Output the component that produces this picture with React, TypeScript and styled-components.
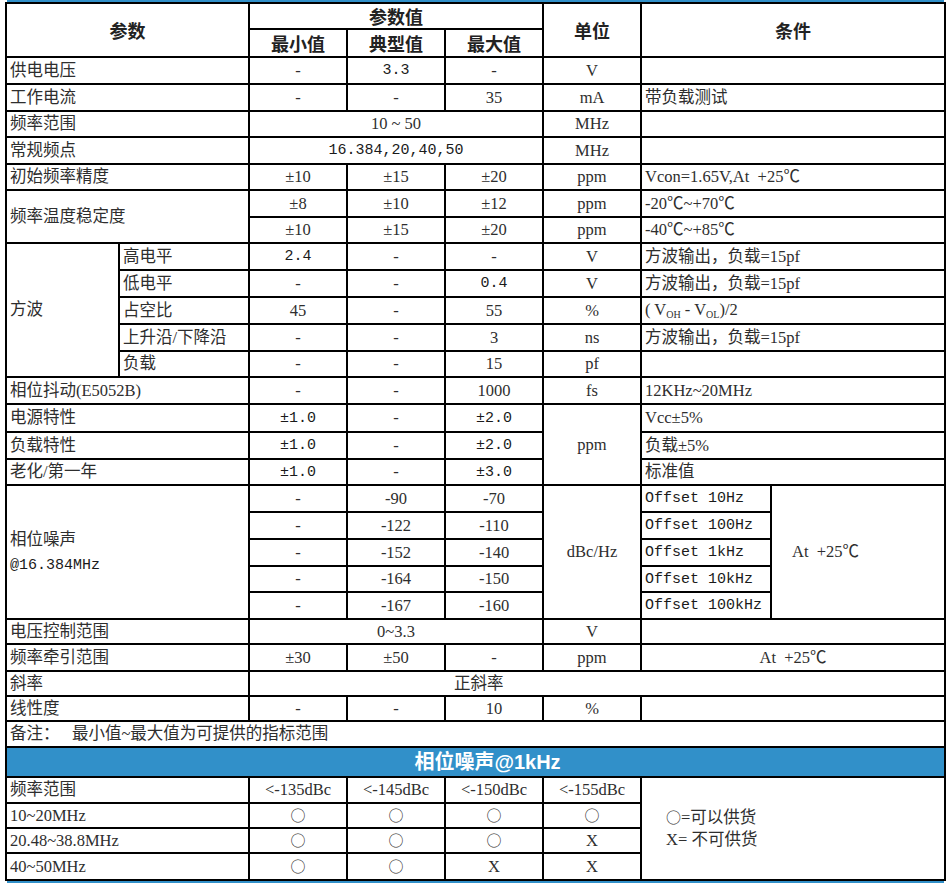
import styled, { createGlobalStyle } from "styled-components";

const BLUE = "#3190c9";
const INK = "#2e2e2e";

const GlobalStyle = createGlobalStyle`
  html, body {
    margin: 0;
    padding: 0;
    background: #fff;
  }
  body {
    font-family: "Liberation Serif", "Noto Sans CJK SC", serif;
    color: ${INK};
  }
`;

type Align = "left" | "center";

const phaseNoise = [
    { min: "-", typ: "-90", max: "-70", offset: "Offset 10Hz", h: 27 },
    { min: "-", typ: "-122", max: "-110", offset: "Offset 100Hz", h: 27 },
    { min: "-", typ: "-152", max: "-140", offset: "Offset 1kHz", h: 27 },
    { min: "-", typ: "-164", max: "-150", offset: "Offset 10kHz", h: 26 },
    { min: "-", typ: "-167", max: "-160", offset: "Offset 100kHz", h: 27 },
];

const supply = [
    { range: "10~20MHz", marks: ["○", "○", "○", "○"], h: 25 },
    { range: "20.48~38.8MHz", marks: ["○", "○", "○", "X"], h: 25 },
    { range: "40~50MHz", marks: ["○", "○", "X", "X"], h: 27 },
];

export default function App() {
    return (
        <>
            <GlobalStyle />
            <Sheet>
                <TopRule />
                <Table>
                    <colgroup>
                        <col style={{ width: 113 }} />
                        <col style={{ width: 130 }} />
                        <col style={{ width: 98 }} />
                        <col style={{ width: 98 }} />
                        <col style={{ width: 98 }} />
                        <col style={{ width: 98 }} />
                        <col style={{ width: 130 }} />
                        <col style={{ width: 174 }} />
                    </colgroup>
                    <thead>
                        <Row $h={26}>
                            <Th rowSpan={2} colSpan={2}>参数</Th>
                            <Th colSpan={3}>参数值</Th>
                            <Th rowSpan={2}>单位</Th>
                            <Th rowSpan={2} colSpan={2}>条件</Th>
                        </Row>
                        <Row $h={28}>
                            <Th>最小值</Th>
                            <Th>典型值</Th>
                            <Th>最大值</Th>
                        </Row>
                    </thead>
                    <tbody>
                        <Row $h={27}>
                            <Td colSpan={2}>供电电压</Td>
                            <Td $align="center">-</Td>
                            <Td $align="center" $mono>3.3</Td>
                            <Td $align="center">-</Td>
                            <Td $align="center">V</Td>
                            <Td colSpan={2} />
                        </Row>
                        <Row $h={27}>
                            <Td colSpan={2}>工作电流</Td>
                            <Td $align="center">-</Td>
                            <Td $align="center">-</Td>
                            <Td $align="center">35</Td>
                            <Td $align="center">mA</Td>
                            <Td colSpan={2}>带负载测试</Td>
                        </Row>
                        <Row $h={26}>
                            <Td colSpan={2}>频率范围</Td>
                            <Td colSpan={3} $align="center">10 ~ 50</Td>
                            <Td $align="center">MHz</Td>
                            <Td colSpan={2} />
                        </Row>
                        <Row $h={27}>
                            <Td colSpan={2}>常规频点</Td>
                            <Td colSpan={3} $align="center" $mono>16.384,20,40,50</Td>
                            <Td $align="center">MHz</Td>
                            <Td colSpan={2} />
                        </Row>
                        <Row $h={26}>
                            <Td colSpan={2}>初始频率精度</Td>
                            <Td $align="center">±10</Td>
                            <Td $align="center">±15</Td>
                            <Td $align="center">±20</Td>
                            <Td $align="center">ppm</Td>
                            <Td colSpan={2}>Vcon=1.65V,At&nbsp; +25℃</Td>
                        </Row>
                        <Row $h={27}>
                            <Td colSpan={2} rowSpan={2}>频率温度稳定度</Td>
                            <Td $align="center">±8</Td>
                            <Td $align="center">±10</Td>
                            <Td $align="center">±12</Td>
                            <Td $align="center">ppm</Td>
                            <Td colSpan={2}>-20℃~+70℃</Td>
                        </Row>
                        <Row $h={26}>
                            <Td $align="center">±10</Td>
                            <Td $align="center">±15</Td>
                            <Td $align="center">±20</Td>
                            <Td $align="center">ppm</Td>
                            <Td colSpan={2}>-40℃~+85℃</Td>
                        </Row>
                        <Row $h={27}>
                            <Td rowSpan={5}>方波</Td>
                            <Td>高电平</Td>
                            <Td $align="center" $mono>2.4</Td>
                            <Td $align="center">-</Td>
                            <Td $align="center">-</Td>
                            <Td $align="center">V</Td>
                            <Td colSpan={2}>方波输出，负载=15pf</Td>
                        </Row>
                        <Row $h={27}>
                            <Td>低电平</Td>
                            <Td $align="center">-</Td>
                            <Td $align="center">-</Td>
                            <Td $align="center" $mono>0.4</Td>
                            <Td $align="center">V</Td>
                            <Td colSpan={2}>方波输出，负载=15pf</Td>
                        </Row>
                        <Row $h={27}>
                            <Td>占空比</Td>
                            <Td $align="center">45</Td>
                            <Td $align="center">-</Td>
                            <Td $align="center">55</Td>
                            <Td $align="center">%</Td>
                            <Td colSpan={2}>
                                ( V<Sub>OH</Sub> - V<Sub>OL</Sub>)/2
                            </Td>
                        </Row>
                        <Row $h={27}>
                            <Td>上升沿/下降沿</Td>
                            <Td $align="center">-</Td>
                            <Td $align="center">-</Td>
                            <Td $align="center">3</Td>
                            <Td $align="center">ns</Td>
                            <Td colSpan={2}>方波输出，负载=15pf</Td>
                        </Row>
                        <Row $h={26}>
                            <Td>负载</Td>
                            <Td $align="center">-</Td>
                            <Td $align="center">-</Td>
                            <Td $align="center">15</Td>
                            <Td $align="center">pf</Td>
                            <Td colSpan={2} />
                        </Row>
                        <Row $h={27}>
                            <Td colSpan={2}>相位抖动(E5052B)</Td>
                            <Td $align="center">-</Td>
                            <Td $align="center">-</Td>
                            <Td $align="center">1000</Td>
                            <Td $align="center">fs</Td>
                            <Td colSpan={2}>12KHz~20MHz</Td>
                        </Row>
                        <Row $h={28}>
                            <Td colSpan={2}>电源特性</Td>
                            <Td $align="center" $mono>±1.0</Td>
                            <Td $align="center">-</Td>
                            <Td $align="center" $mono>±2.0</Td>
                            <Td $align="center" rowSpan={3}>ppm</Td>
                            <Td colSpan={2}>Vcc±5%</Td>
                        </Row>
                        <Row $h={27}>
                            <Td colSpan={2}>负载特性</Td>
                            <Td $align="center" $mono>±1.0</Td>
                            <Td $align="center">-</Td>
                            <Td $align="center" $mono>±2.0</Td>
                            <Td colSpan={2}>负载±5%</Td>
                        </Row>
                        <Row $h={26}>
                            <Td colSpan={2}>老化/第一年</Td>
                            <Td $align="center" $mono>±1.0</Td>
                            <Td $align="center">-</Td>
                            <Td $align="center" $mono>±3.0</Td>
                            <Td colSpan={2}>标准值</Td>
                        </Row>
                        {phaseNoise.map((r, i) => (
                            <Row $h={r.h} key={r.offset}>
                                {i === 0 && (
                                    <Td colSpan={2} rowSpan={5} $lines>
                                        相位噪声
                                        <br />
                                        <Mono>@16.384MHz</Mono>
                                    </Td>
                                )}
                                <Td $align="center">{r.min}</Td>
                                <Td $align="center">{r.typ}</Td>
                                <Td $align="center">{r.max}</Td>
                                {i === 0 && <Td $align="center" rowSpan={5}>dBc/Hz</Td>}
                                <Td $mono>{r.offset}</Td>
                                {i === 0 && <Td rowSpan={5} $indent={20}>At&nbsp; +25℃</Td>}
                            </Row>
                        ))}
                        <Row $h={25}>
                            <Td colSpan={2}>电压控制范围</Td>
                            <Td colSpan={3} $align="center">0~3.3</Td>
                            <Td $align="center">V</Td>
                            <Td colSpan={2} />
                        </Row>
                        <Row $h={27}>
                            <Td colSpan={2}>频率牵引范围</Td>
                            <Td $align="center">±30</Td>
                            <Td $align="center">±50</Td>
                            <Td $align="center">-</Td>
                            <Td $align="center">ppm</Td>
                            <Td colSpan={2} $align="center">At&nbsp; +25℃</Td>
                        </Row>
                        <Row $h={25}>
                            <Td colSpan={2}>斜率</Td>
                            <Td colSpan={6} $indent={204}>正斜率</Td>
                        </Row>
                        <Row $h={25}>
                            <Td colSpan={2}>线性度</Td>
                            <Td $align="center">-</Td>
                            <Td $align="center">-</Td>
                            <Td $align="center">10</Td>
                            <Td $align="center">%</Td>
                            <Td colSpan={2} />
                        </Row>
                        <Row $h={26}>
                            <Td colSpan={8}>备注：&nbsp;&nbsp; 最小值~最大值为可提供的指标范围</Td>
                        </Row>
                        <Row $h={30}>
                            <Band colSpan={8}>相位噪声@1kHz</Band>
                        </Row>
                        <Row $h={26}>
                            <Td colSpan={2}>频率范围</Td>
                            <Td $align="center">&lt;-135dBc</Td>
                            <Td $align="center">&lt;-145dBc</Td>
                            <Td $align="center">&lt;-150dBc</Td>
                            <Td $align="center">&lt;-155dBc</Td>
                            <Legend colSpan={2} rowSpan={4}>
                                <Mark $circle>○</Mark>=可以供货
                                <br />
                                X= 不可供货
                            </Legend>
                        </Row>
                        {supply.map(r => (
                            <Row $h={r.h} key={r.range}>
                                <Td colSpan={2}>{r.range}</Td>
                                {r.marks.map((m, j) => (
                                    <Td $align="center" key={j}>
                                        <Mark $circle={m === "○"}>{m}</Mark>
                                    </Td>
                                ))}
                            </Row>
                        ))}
                    </tbody>
                </Table>
                <BottomRule />
            </Sheet>
        </>
    );
}

const Sheet = styled.div`
    width: 939px;
    margin-left: 5px;
`;

const TopRule = styled.div`
    height: 2px;
    margin-left: 2px;
    background: ${BLUE};
`;

const BottomRule = styled.div`
    height: 3px;
    margin-left: 2px;
    background: ${BLUE};
`;

const Table = styled.table`
    width: 939px;
    border-collapse: collapse;
    table-layout: fixed;
    font-size: 16.5px;
    line-height: 1.15;
`;

const Row = styled.tr<{ $h: number }>`
    height: ${({ $h }) => $h}px;
`;

const Th = styled.th`
    border: 2px solid #000;
    padding: 0;
    font-family: "Noto Sans CJK SC", sans-serif;
    font-size: 18px;
    font-weight: 700;
    color: #222;
    text-align: center;
    vertical-align: middle;
    white-space: nowrap;
`;

const Td = styled.td<{ $align?: Align; $indent?: number; $lines?: boolean; $mono?: boolean }>`
    border: 2px solid #000;
    padding: 1px 0 0 ${({ $indent, $align }) => ($align === "center" ? 0 : $indent ?? 3)}px;
    text-align: ${({ $align }) => $align ?? "left"};
    vertical-align: middle;
    white-space: nowrap;
    overflow: hidden;
    font-family: ${({ $mono }) =>
        $mono ? `"Liberation Mono", "Noto Sans CJK SC", monospace` : "inherit"};
    font-size: ${({ $mono }) => ($mono ? "15px" : "inherit")};
    color: ${({ $mono }) => ($mono ? "#1a1a1a" : INK)};
    line-height: ${({ $lines }) => ($lines ? "24px" : "1.15")};
`;

const Mono = styled.span`
    font-family: "Liberation Mono", monospace;
    font-size: 15px;
    color: #1a1a1a;
`;

const Sub = styled.sub`
    font-size: 10px;
    vertical-align: -3px;
`;

const Mark = styled.span<{ $circle?: boolean }>`
    font-family: ${({ $circle }) =>
        $circle ? `"Noto Sans CJK SC", sans-serif` : "inherit"};
    font-size: ${({ $circle }) => ($circle ? "15px" : "inherit")};
`;

const Band = styled.td`
    border: 2px solid #000;
    padding: 0 0 0 24px;
    background: ${BLUE};
    color: #fff;
    font-family: "Liberation Sans", "Noto Sans CJK SC", sans-serif;
    font-size: 20px;
    font-weight: 700;
    text-align: center;
    vertical-align: middle;
`;

const Legend = styled.td`
    border: 2px solid #000;
    padding: 0 0 0 24px;
    vertical-align: middle;
    line-height: 22px;
    white-space: nowrap;
`;
